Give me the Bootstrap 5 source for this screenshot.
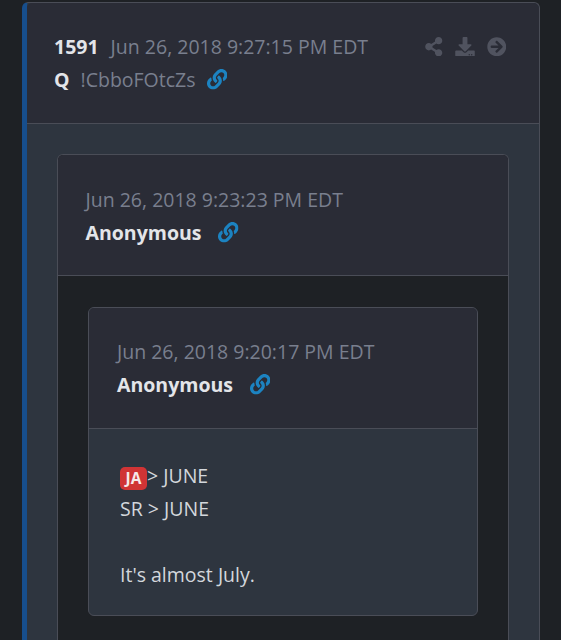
<!DOCTYPE html>
<html lang="en" data-bs-theme="dark">
<head>
<meta charset="utf-8">
<meta name="viewport" content="width=device-width, initial-scale=1">
<title>Post 1591</title>
<link href="https://cdn.jsdelivr.net/npm/bootstrap@5.3.0/dist/css/bootstrap.min.css" rel="stylesheet">
<style>
body { background: #1e2125; color: #d3d7dc; font-family: "Open Sans", "Noto Sans", sans-serif; font-size: 19.5px; line-height: 33px; }
.post { --bs-card-border-color: #4a4d57; --bs-card-border-radius: 6px; --bs-card-inner-border-radius: 5px; --bs-card-bg: #2e353f; --bs-card-cap-bg: #2a2c36; --bs-card-color: #d3d7dc; border-radius: 6px; }
.post > .card-header { padding: 27px; height: 121px; white-space: nowrap; }
.post-main { margin: 2px 21px 0 22px; border-left: 5px solid #174e8c; height: 638px; }
.post-main > .card-body { padding: 30px 30px 0; }
.post-mid { --bs-card-bg: #1e2125; height: 100%; }
.post-main, .post-mid { border-radius: 6px 6px 0 0; }
.post-mid > .card-header { padding: 28px 27.5px 26px; }
.post-mid > .card-body { padding: 31px 30px 0; }
.post-leaf > .card-header { padding: 27px 28px; }
.post-leaf > .card-body { padding: 30px 31px 24px; height: 186px; }
.stamp { color: #797f8e; }
.strong-text { color: #e3e5e9; font-weight: 700; }
.post-id { margin-right: 12px; }
.link-icon { width: 20.5px; height: 20.5px; fill: #1c83c1; flex: none; margin-left: 17px; }
.trip { margin-left: 11px; }
.trip + .link-icon { margin-left: 11px; }
.actions { gap: 12px; height: 33px; margin-right: 6px; }
.actions svg { height: 19.5px; fill: #50535f; }
.tag { background: #d03435; color: #f6e9ea; font-size: 15.5px; font-weight: 700; line-height: 23px; height: 23px; width: 27px; border-radius: 5px; text-align: center; margin-top: 8px; }
</style>
</head>
<body>
<svg class="d-none" xmlns="http://www.w3.org/2000/svg">
  <symbol id="link" viewBox="0 0 512 512"><path d="M326.612 185.391c59.747 59.809 58.927 155.698.36 214.59-.11.12-.24.25-.36.37l-67.2 67.2c-59.27 59.27-155.699 59.262-214.96 0-59.27-59.26-59.27-155.7 0-214.96l37.106-37.106c9.84-9.84 26.786-3.3 27.294 10.606.648 17.722 3.826 35.527 9.69 52.721 1.986 5.822.567 12.262-3.783 16.612l-13.087 13.087c-28.026 28.026-28.905 73.66-1.155 101.96 28.024 28.579 74.086 28.749 102.325.51l67.2-67.19c28.191-28.191 28.073-73.757 0-101.83-3.701-3.694-7.429-6.564-10.341-8.569a16.037 16.037 0 0 1-6.947-12.606c-.396-10.567 3.348-21.456 11.698-29.806l21.054-21.055c5.521-5.521 14.182-6.199 20.584-1.731a152.482 152.482 0 0 1 20.522 17.197zM467.547 44.449c-59.261-59.262-155.69-59.27-214.96 0l-67.2 67.2c-.12.12-.25.25-.36.37-58.566 58.892-59.387 154.781.36 214.59a152.454 152.454 0 0 0 20.521 17.196c6.402 4.468 15.064 3.789 20.584-1.731l21.054-21.055c8.35-8.35 12.094-19.239 11.698-29.806a16.037 16.037 0 0 0-6.947-12.606c-2.912-2.005-6.64-4.875-10.341-8.569-28.073-28.073-28.191-73.639 0-101.83l67.2-67.19c28.239-28.239 74.3-28.069 102.325.51 27.75 28.3 26.872 73.934-1.155 101.96l-13.087 13.087c-4.35 4.35-5.769 10.79-3.783 16.612 5.864 17.194 9.042 34.999 9.69 52.721.509 13.906 17.454 20.446 27.294 10.606l37.106-37.106c59.271-59.259 59.271-155.699.001-214.959z"/></symbol>
</svg>
<article class="card post post-main border-bottom-0 overflow-hidden">
  <header class="card-header d-flex justify-content-between">
    <div>
      <div class="d-flex"><span class="strong-text post-id">1591</span><span class="stamp">Jun 26, 2018 9:27:15 PM EDT</span></div>
      <div class="d-flex align-items-center"><span class="strong-text">Q</span><span class="stamp trip">!CbboFOtcZs</span><svg class="link-icon"><use href="#link"/></svg></div>
    </div>
    <div class="actions d-flex align-items-center">
      <svg viewBox="0 0 448 512" width="17.5"><path d="M352 320c-22.608 0-43.387 7.819-59.79 20.895l-102.486-64.054a96.551 96.551 0 0 0 0-41.683l102.486-64.054C308.613 184.181 329.392 192 352 192c53.019 0 96-42.981 96-96S405.019 0 352 0s-96 42.981-96 96c0 7.158.79 14.13 2.276 20.841L155.79 180.895C139.387 167.819 118.608 160 96 160c-53.019 0-96 42.981-96 96s42.981 96 96 96c22.608 0 43.387-7.819 59.79-20.895l102.486 64.054A96.301 96.301 0 0 0 256 416c0 53.019 42.981 96 96 96s96-42.981 96-96-42.981-96-96-96z"/></svg>
      <svg viewBox="0 0 512 512" width="20"><path d="M216 0h80c13.3 0 24 10.7 24 24v168h87.7c17.8 0 26.7 21.5 14.1 34.1L269.7 378.3c-7.5 7.5-19.8 7.5-27.3 0L90.1 226.1c-12.6-12.6-3.7-34.1 14.1-34.1H192V24c0-13.3 10.7-24 24-24zm296 376v112c0 13.3-10.7 24-24 24H24c-13.3 0-24-10.7-24-24V376c0-13.3 10.7-24 24-24h146.7l49 49c20.1 20.1 52.5 20.1 72.6 0l49-49H488c13.3 0 24 10.7 24 24zm-124 88c0-11-9-20-20-20s-20 9-20 20 9 20 20 20 20-9 20-20zm64 0c0-11-9-20-20-20s-20 9-20 20 9 20 20 20 20-9 20-20z"/></svg>
      <svg viewBox="0 0 512 512" width="19.5"><path fill-rule="evenodd" d="M256 8c137 0 248 111 248 248S393 504 256 504 8 393 8 256 119 8 256 8zm-28.9 143.6l75.5 72.4H120c-13.3 0-24 10.7-24 24v16c0 13.3 10.7 24 24 24h182.6l-75.5 72.4c-9.7 9.3-9.9 24.8-.4 34.3l11 10.9c9.4 9.4 24.6 9.4 33.9 0L404.3 273c9.4-9.4 9.4-24.6 0-33.9L271.6 106.3c-9.4-9.4-24.6-9.4-33.9 0l-11 10.9c-9.5 9.6-9.3 25.1.4 34.4z"/></svg>
    </div>
  </header>
  <div class="card-body">
    <article class="card post post-mid border-bottom-0">
      <header class="card-header">
        <div class="stamp">Jun 26, 2018 9:23:23 PM EDT</div>
        <div class="d-flex align-items-center"><span class="strong-text">Anonymous</span><svg class="link-icon"><use href="#link"/></svg></div>
      </header>
      <div class="card-body">
        <article class="card post post-leaf">
          <header class="card-header">
            <div class="stamp">Jun 26, 2018 9:20:17 PM EDT</div>
            <div class="d-flex align-items-center"><span class="strong-text">Anonymous</span><svg class="link-icon"><use href="#link"/></svg></div>
          </header>
          <div class="card-body">
            <div class="d-flex align-items-start"><span class="tag">JA</span><span>&gt; JUNE</span></div>
            <div>SR &gt; JUNE</div>
            <br>
            <div>It's almost July.</div>
          </div>
        </article>
      </div>
    </article>
  </div>
</article>
<script src="https://cdn.jsdelivr.net/npm/bootstrap@5.3.0/dist/js/bootstrap.bundle.min.js"></script>
</body>
</html>
